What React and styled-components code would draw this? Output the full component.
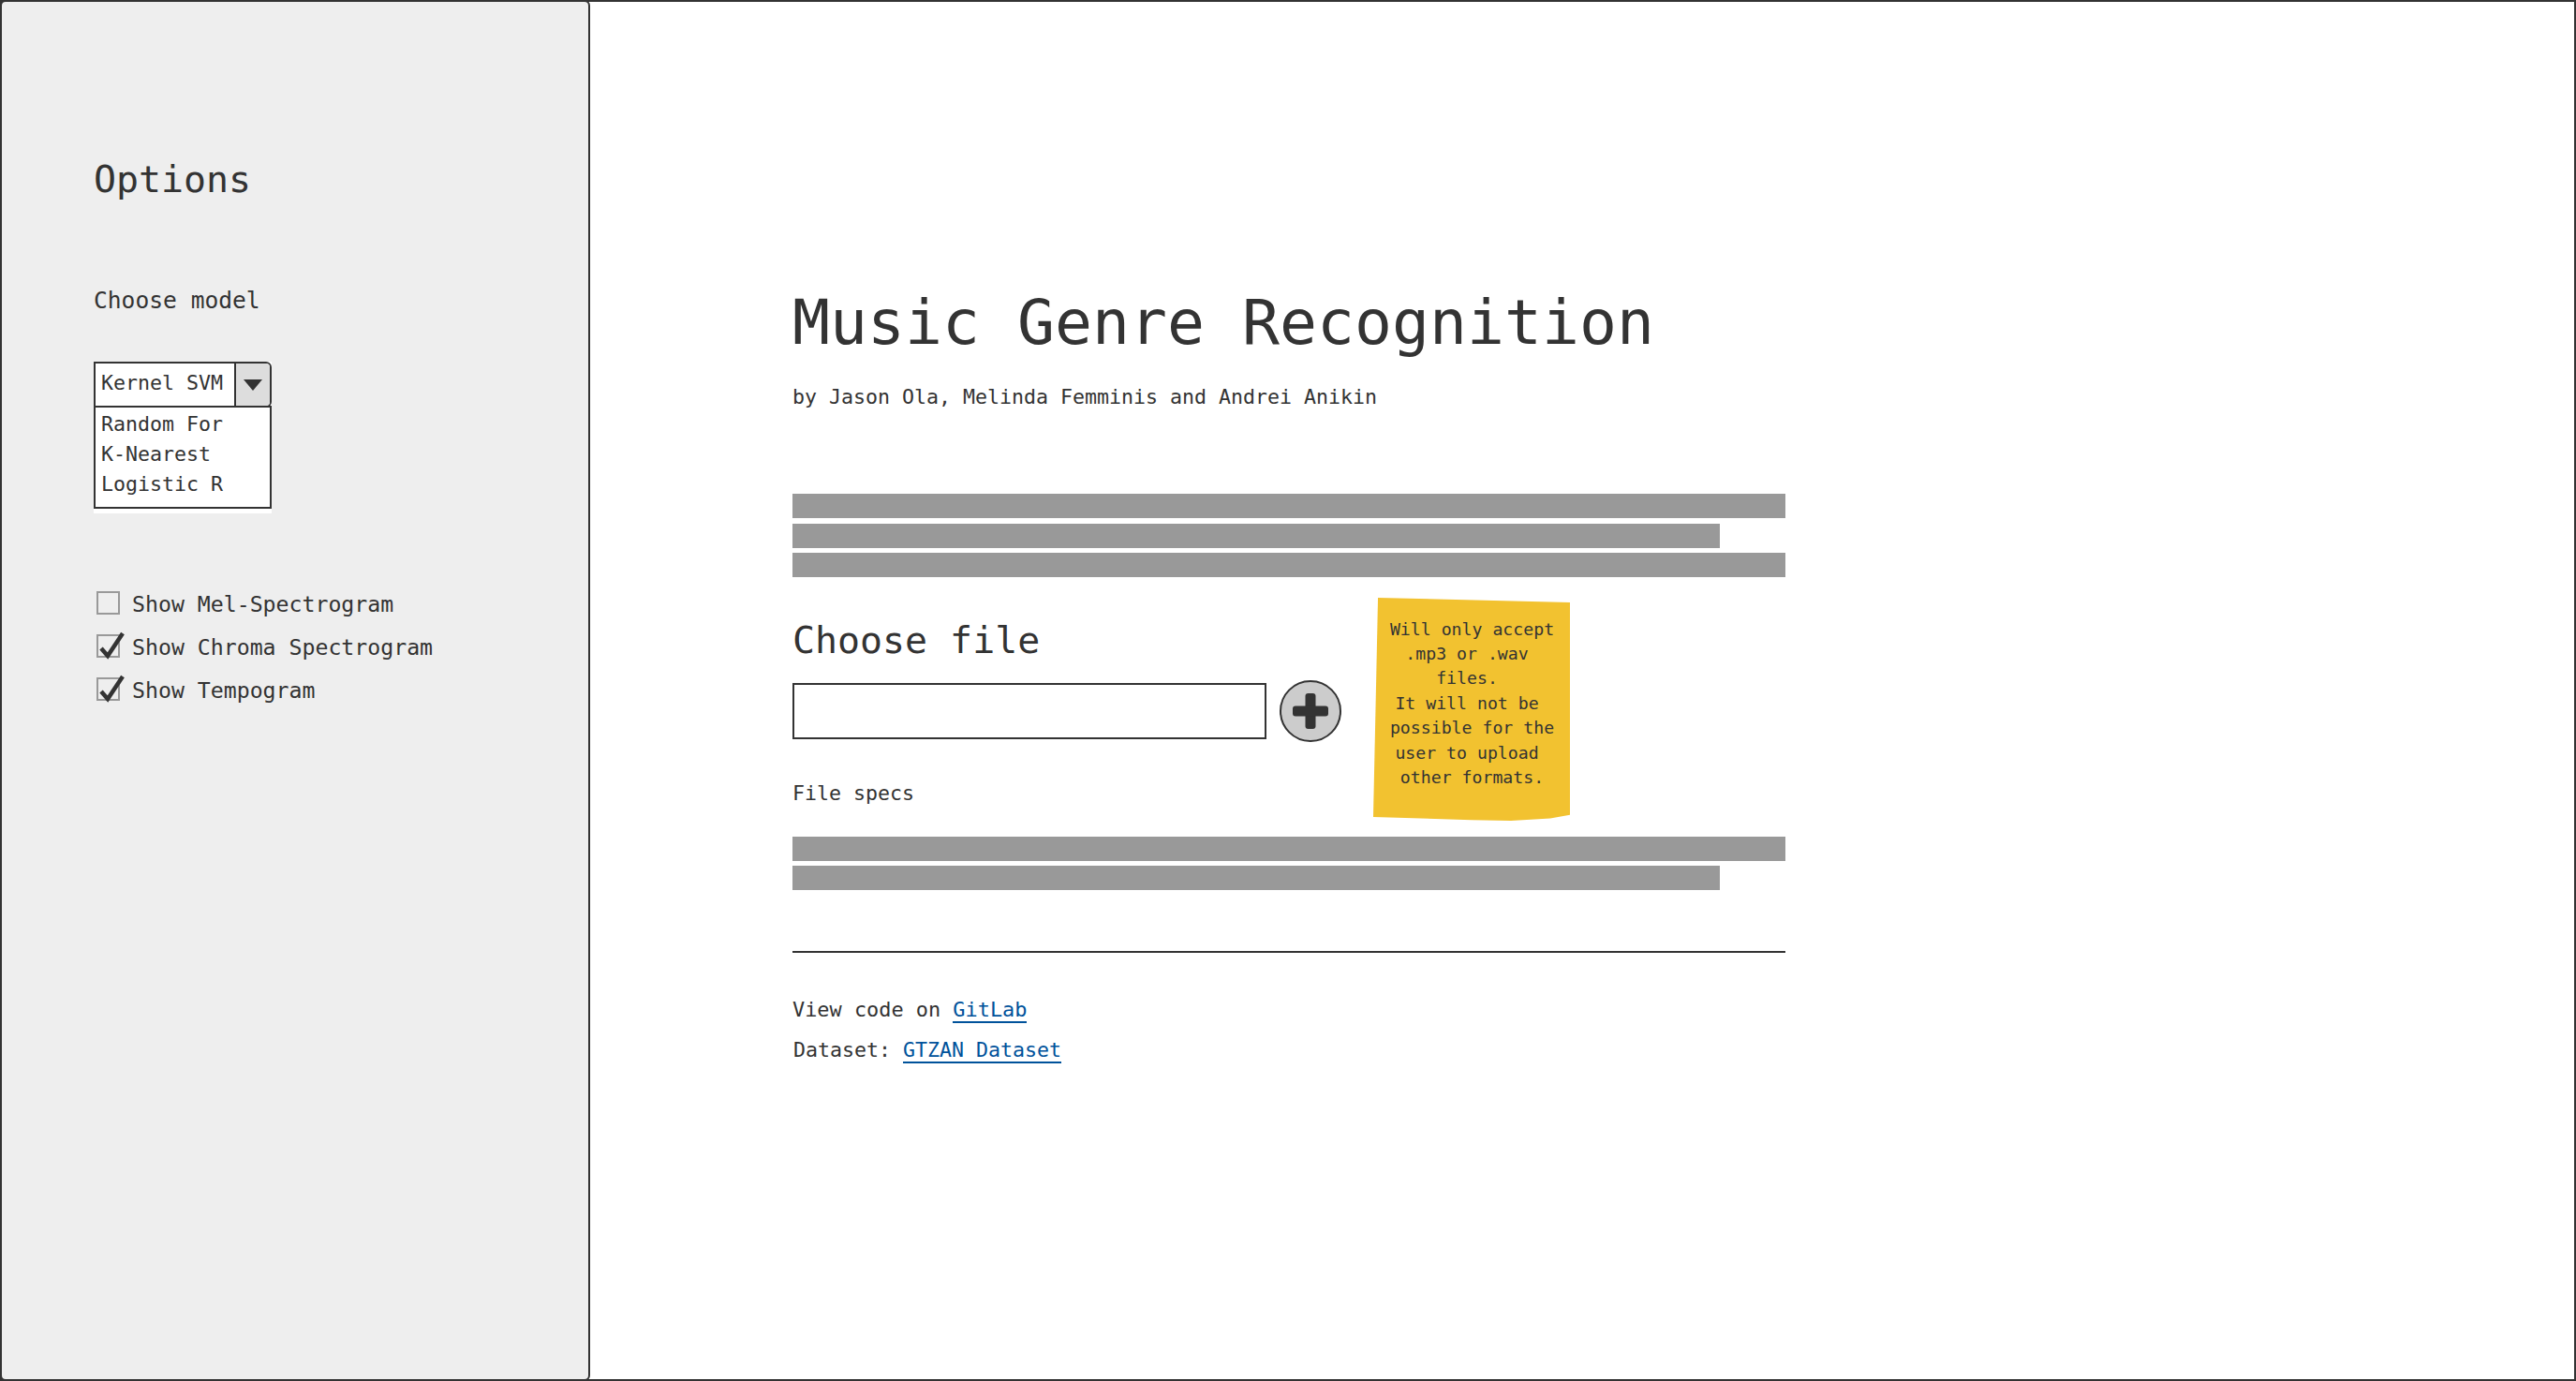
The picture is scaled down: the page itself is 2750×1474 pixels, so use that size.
import React from "react";
import styled, { createGlobalStyle } from "styled-components";

const Global = createGlobalStyle`
  html, body { margin: 0; padding: 0; background: #fff; }
  * { box-sizing: border-box; }
  body { font-family: "DejaVu Sans Mono", "Liberation Mono", monospace; color: #333; }
`;

const Frame = styled.div`
  width: 2750px;
  height: 1474px;
  border: 2px solid #333;
  display: flex;
  align-items: stretch;
  background: #fff;
  overflow: hidden;
`;

const Sidebar = styled.aside`
  width: 630px;
  margin: -2px 0 -2px -2px;
  padding: 165px 0 0 98px;
  flex: none;
  background: #eee;
  border: 2px solid #333;
  border-radius: 6px;
  display: flex;
  flex-direction: column;
  align-items: flex-start;
`;

const SideTitle = styled.h2`
  margin: 0;
  font-size: 39.9px;
  line-height: 48px;
  font-weight: 400;
`;

const ModelLabel = styled.div`
  margin-top: 91px;
  font-size: 24.6px;
  line-height: 30px;
`;

const SelectWrap = styled.div`
  margin-top: 50px;
  width: 190px;
  background: #fff;
  padding-bottom: 5px;
`;

const SelectHead = styled.div`
  display: flex;
  height: 49px;
  border: 2px solid #333;
  border-radius: 0 6px 6px 0;
  font-size: 21.6px;
`;

const SelectValue = styled.div`
  flex: 1;
  padding-left: 6px;
  line-height: 41px;
  background: #fff;
`;

const SelectButton = styled.div`
  width: 38px;
  background: #ddd;
  border-left: 2px solid #333;
  border-radius: 0 4px 4px 0;
  display: flex;
  align-items: center;
  justify-content: center;
`;

const SelectList = styled.div`
  margin-top: -2px;
  height: 110px;
  padding: 2px 0 0 6px;
  border: 2px solid #333;
  font-size: 21.6px;
  line-height: 32px;
`;

const Checks = styled.div`
  margin-top: 74px;
  margin-left: 3px;
  display: flex;
  flex-direction: column;
`;

const CheckRow = styled.label`
  display: flex;
  align-items: center;
  gap: 13px;
  height: 46px;
  font-size: 23.2px;
  line-height: 46px;
`;

const CheckBox = styled.span`
  position: relative;
  width: 25px;
  height: 25px;
  margin-top: -4px;
  flex: none;
  border: 2px solid #999;
  background: #eee;
  svg { position: absolute; left: 1px; top: -5px; overflow: visible; }
`;

const Main = styled.main`
  width: 1060px;
  margin-left: 216px;
  padding-top: 302px;
  position: relative;
  display: flex;
  flex-direction: column;
`;

const Title = styled.h1`
  margin: 0;
  font-size: 66.45px;
  line-height: 80px;
  font-weight: 400;
`;

const Byline = styled.p`
  margin: 23.6px 0 0;
  font-size: 21.6px;
  line-height: 32px;
`;

const TextBlock = styled.div`
  margin-top: ${p => p.$top}px;
  display: flex;
  flex-direction: column;
  gap: 5.5px;
`;

const Bar = styled.div`
  height: 26px;
  background: #999;
  width: ${p => (p.$short ? "990px" : "100%")};
`;

const Heading = styled.h2`
  margin: 43px 0 0;
  font-size: 39.9px;
  line-height: 48px;
  font-weight: 400;
`;

const UploadRow = styled.div`
  margin-top: 19px;
  height: 66px;
  display: flex;
  align-items: center;
  gap: 14px;
`;

const FileInput = styled.div`
  width: 506px;
  height: 60px;
  border: 2px solid #333;
  background: #fff;
`;

const AddButton = styled.div`
  width: 66px;
  height: 66px;
  flex: none;
  border-radius: 50%;
  border: 2px solid #333;
  background: #ccc;
  display: flex;
  align-items: center;
  justify-content: center;
`;

const Specs = styled.p`
  margin: 39px 0 0;
  font-size: 21.6px;
  line-height: 32px;
`;

const Rule = styled.hr`
  margin: 65px 0 0;
  border: 0;
  height: 2px;
  background: #333;
`;

const FooterLine = styled.p`
  margin: ${p => p.$top}px 0 0 ${p => p.$indent || 0}px;
  font-size: ${p => p.$size}px;
  line-height: 32px;
`;

const Link = styled.a`
  color: #00529b;
  text-decoration: none;
  border-bottom: 2px solid #00529b;
  padding-bottom: 0;
`;

const Sticky = styled.div`
  position: absolute;
  left: 620px;
  top: 636px;
  width: 210px;
  height: 238px;
  padding: 20.5px 0 0 1px;
  background: #f2c230;
  clip-path: polygon(2.4% 0, 100% 2.1%, 100% 97.4%, 90% 99%, 70% 100%, 50% 99.7%, 0 98.3%);
  font-size: 18.2px;
  line-height: 26.4px;
  text-align: center;
  white-space: pre;
`;

const Note = [
  "Will only accept",
  ".mp3 or .wav ",
  "files. ",
  "It will not be ",
  "possible for the",
  "user to upload ",
  "other formats.",
];

const Check = () => (
  <svg width="30" height="30" viewBox="0 0 30 30" fill="none">
    <path d="M2 18 L9 26 L25 2" stroke="#333" strokeWidth="4.5" />
  </svg>
);

const Box = ({ checked }) => <CheckBox>{checked && <Check />}</CheckBox>;

export default function App() {
  return (
    <>
      <Global />
      <Frame>
        <Sidebar>
          <SideTitle>Options</SideTitle>
          <ModelLabel>Choose model</ModelLabel>
          <SelectWrap>
            <SelectHead>
              <SelectValue>Kernel SVM</SelectValue>
              <SelectButton>
                <svg width="20" height="12" viewBox="0 0 20 12">
                  <path d="M0 0H20L10 12Z" fill="#333" />
                </svg>
              </SelectButton>
            </SelectHead>
            <SelectList>
              <div>Random For</div>
              <div>K-Nearest</div>
              <div>Logistic R</div>
            </SelectList>
          </SelectWrap>
          <Checks>
            <CheckRow><Box />Show Mel-Spectrogram</CheckRow>
            <CheckRow><Box checked />Show Chroma Spectrogram</CheckRow>
            <CheckRow><Box checked />Show Tempogram</CheckRow>
          </Checks>
        </Sidebar>
        <Main>
          <Title>Music Genre Recognition</Title>
          <Byline>by Jason Ola, Melinda Femminis and Andrei Anikin</Byline>
          <TextBlock $top={87.7}>
            <Bar />
            <Bar $short />
            <Bar />
          </TextBlock>
          <Heading>Choose file</Heading>
          <UploadRow>
            <FileInput />
            <AddButton>
              <svg width="40" height="40" viewBox="0 0 40 40">
                <rect x="14.5" y="1" width="11" height="38" rx="3" fill="#333" />
                <rect x="1" y="14.5" width="38" height="11" rx="3" fill="#333" />
              </svg>
            </AddButton>
          </UploadRow>
          <Specs>File specs</Specs>
          <TextBlock $top={29.7}>
            <Bar />
            <Bar $short />
          </TextBlock>
          <Rule />
          <FooterLine $top={45} $size={21.9}>View code on <Link href="#">GitLab</Link></FooterLine>
          <FooterLine $top={11} $size={21.6} $indent={1}>Dataset: <Link href="#">GTZAN Dataset</Link></FooterLine>
          <Sticky>
            {Note.map(line => <div key={line}>{line}</div>)}
          </Sticky>
        </Main>
      </Frame>
    </>
  );
}
